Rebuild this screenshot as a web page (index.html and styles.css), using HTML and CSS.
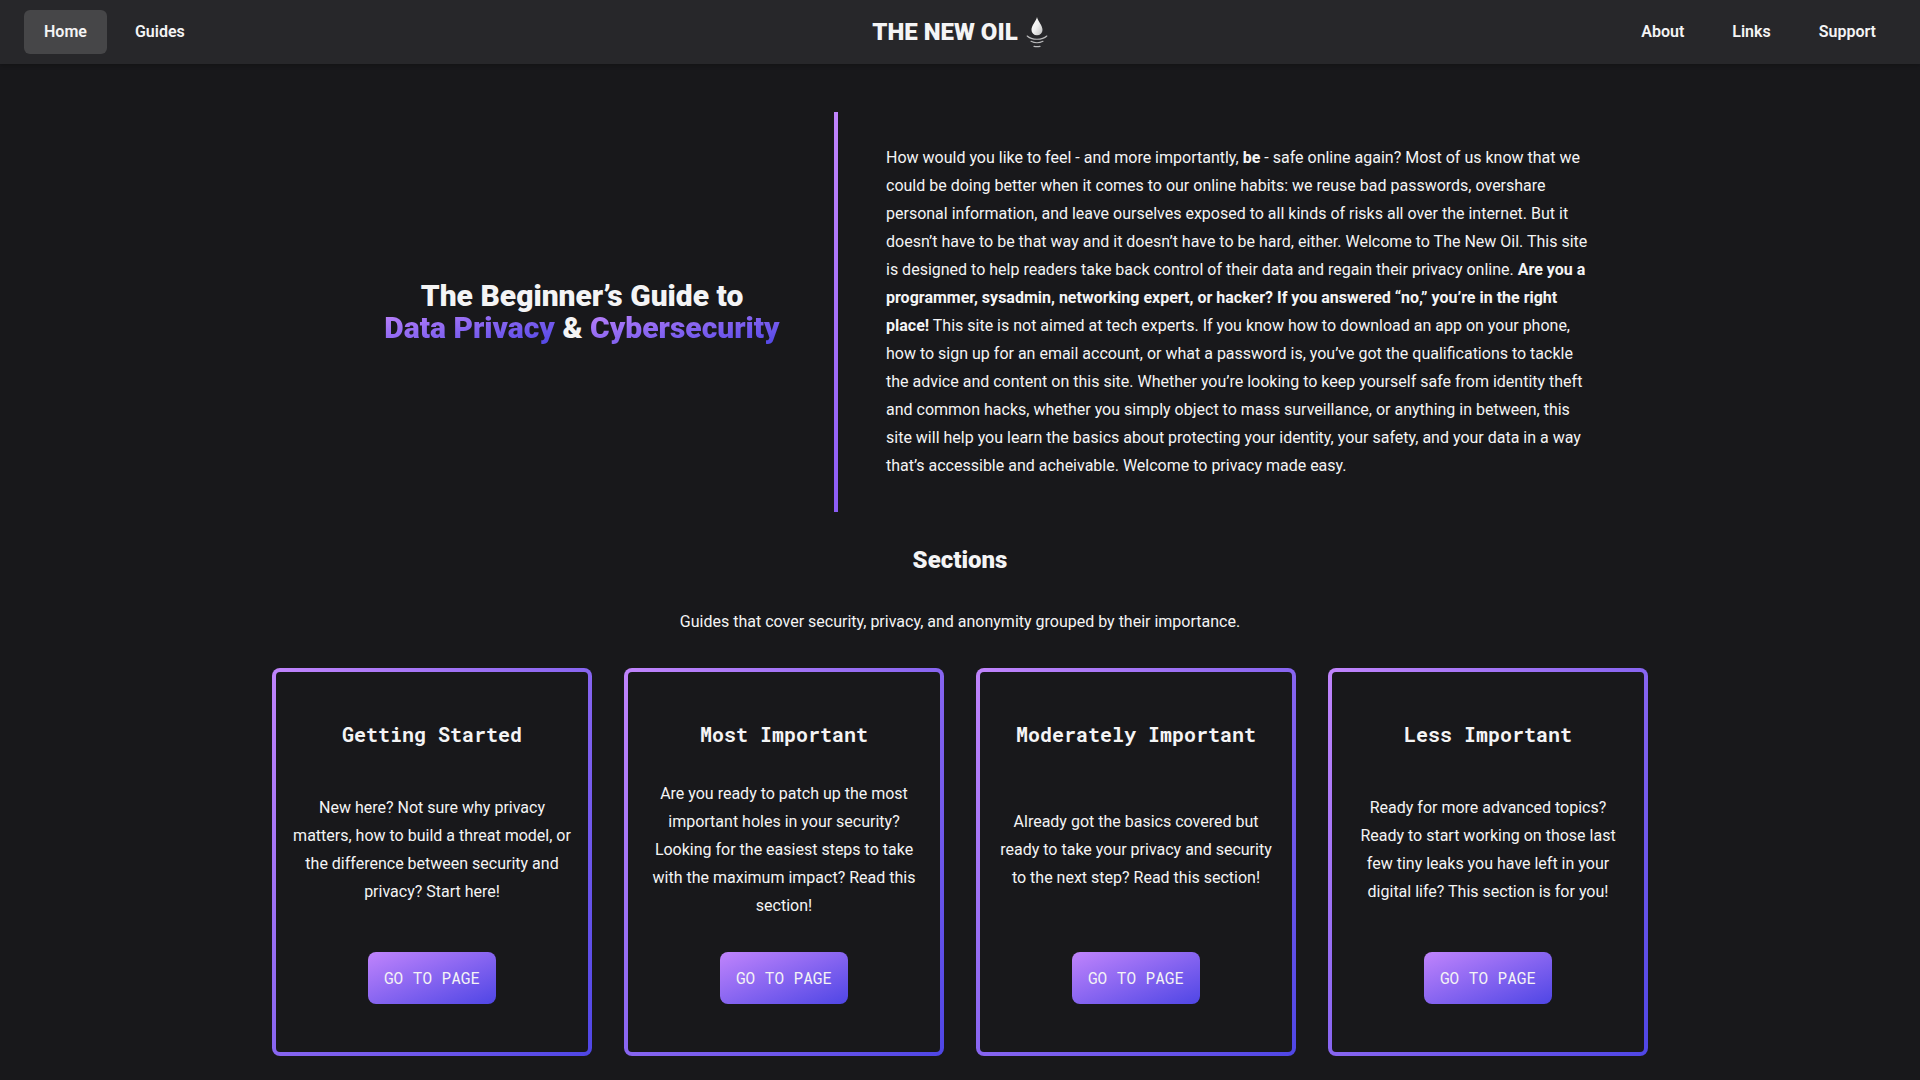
FILE: index.html
```html
<!DOCTYPE html>
<html lang="en">
<head>
<meta charset="utf-8">
<meta name="viewport" content="width=device-width, initial-scale=1">
<title>The New Oil</title>
<link rel="stylesheet" href="styles.css">
</head>
<body>
<header class="navbar">
  <nav class="nav-group" aria-label="Main">
    <a class="nav-link nav-link-active" href="#" aria-current="page">Home</a>
    <a class="nav-link" href="#guides">Guides</a>
  </nav>
  <a class="brand" href="#">
    <span>THE NEW OIL</span>
    <svg class="brand-icon" viewBox="0 0 22 32" aria-hidden="true">
      <defs>
        <linearGradient id="drop" x1="0" y1="0" x2="1" y2="1">
          <stop offset="0" stop-color="#ffffff"/>
          <stop offset="0.5" stop-color="#f0f0f0"/>
          <stop offset="1" stop-color="#bcbcbc"/>
        </linearGradient>
      </defs>
      <path d="M11 1C10.400 5 5.500 9 5.500 14A5.500 5.300 0 0 0 16.500 14C16.500 9 11.600 5 11 1Z" fill="url(#drop)"/>
      <g fill="none" stroke="#b9b9bb" stroke-linecap="round">
        <path d="M1.200 20Q4.500 23.300 11 23.300T20.800 20" stroke-width="1.100"/>
        <path d="M5 25.300Q11 28.200 17 25.300" stroke-width="1.100"/>
        <path d="M8 30.300Q11 31 14 30.300" stroke-width="1.200"/>
      </g>
    </svg>
  </a>
  <nav class="nav-group nav-group-end" aria-label="More">
    <a class="nav-link" href="#about">About</a>
    <a class="nav-link" href="#links">Links</a>
    <a class="nav-link" href="#support">Support</a>
  </nav>
</header>
<main>
  <section class="hero">
    <h1 class="hero-title">The Beginner’s Guide to<br><span class="accent">Data Privacy</span> &amp; <span class="accent">Cybersecurity</span></h1>
    <p class="hero-text">How would you like to feel - and more importantly, <strong>be</strong> - safe online again? Most of us know that we could be doing better when it comes to our online habits: we reuse bad passwords, overshare personal information, and leave ourselves exposed to all kinds of risks all over the internet. But it doesn’t have to be that way and it doesn’t have to be hard, either. Welcome to The New Oil. This site is designed to help readers take back control of their data and regain their privacy online. <strong>Are you a programmer, sysadmin, networking expert, or hacker? If you answered “no,” you’re in the right place!</strong> This site is not aimed at tech experts. If you know how to download an app on your phone, how to sign up for an email account, or what a password is, you’ve got the qualifications to tackle the advice and content on this site. Whether you’re looking to keep yourself safe from identity theft and common hacks, whether you simply object to mass surveillance, or anything in between, this site will help you learn the basics about protecting your identity, your safety, and your data in a way that’s accessible and acheivable. Welcome to privacy made easy.</p>
  </section>
  <section class="sections" id="guides">
    <h2 class="sections-title">Sections</h2>
    <p>Guides that cover security, privacy, and anonymity grouped by their importance.</p>
    <div class="cards">
      <article class="card">
        <h3 class="card-title">Getting Started</h3>
        <p class="card-text">New here? Not sure why privacy matters, how to build a threat model, or the difference between security and privacy? Start here!</p>
        <a class="button" href="#getting-started">GO TO PAGE</a>
      </article>
      <article class="card">
        <h3 class="card-title">Most Important</h3>
        <p class="card-text">Are you ready to patch up the most important holes in your security? Looking for the easiest steps to take with the maximum impact? Read this section!</p>
        <a class="button" href="#most-important">GO TO PAGE</a>
      </article>
      <article class="card">
        <h3 class="card-title">Moderately Important</h3>
        <p class="card-text">Already got the basics covered but ready to take your privacy and security to the next step? Read this section!</p>
        <a class="button" href="#moderately-important">GO TO PAGE</a>
      </article>
      <article class="card">
        <h3 class="card-title">Less Important</h3>
        <p class="card-text">Ready for more advanced topics? Ready to start working on those last few tiny leaks you have left in your digital life? This section is for you!</p>
        <a class="button" href="#less-important">GO TO PAGE</a>
      </article>
    </div>
  </section>
</main>
</body>
</html>
```
FILE: styles.css
```css
:root {
  --bg: #18181b;
  --bar: #27272a;
  --text: #f4f4f5;
  --from: #c084fc;
  --to: #4f46e5;
  --mono: "Roboto Mono", "Liberation Mono", monospace;
}

* {
  box-sizing: border-box;
  margin: 0;
}

body {
  background: var(--bg);
  color: var(--text);
  font: 16px/28px Roboto, sans-serif;
}

a {
  color: inherit;
  text-decoration: none;
}

.navbar {
  display: grid;
  grid-template-columns: 1fr auto 1fr;
  align-items: center;
  padding: 10px 24px;
  background: var(--bar);
  box-shadow: 0 2px 4px rgba(0, 0, 0, 0.2);
}

.nav-group {
  display: flex;
  gap: 8px;
}

.nav-group-end {
  justify-content: flex-end;
}

.nav-link {
  padding: 8px 20px;
  border-radius: 6px;
  font-weight: 600;
}

.nav-link-active {
  background: #464648;
}

.brand {
  display: flex;
  align-items: center;
  gap: 8px;
  font-size: 24px;
  font-weight: 900;
}

.brand-icon {
  width: 22px;
  height: 32px;
}

.hero {
  display: grid;
  grid-template-columns: 2fr 3fr;
  align-items: center;
  max-width: 1260px;
  margin: 48px auto 32px;
}

.hero-title {
  font-size: 30px;
  line-height: 32px;
  font-weight: 900;
  text-align: center;
}

.accent {
  background: linear-gradient(to bottom right, var(--from), var(--to));
  background-clip: text;
  -webkit-background-clip: text;
  color: transparent;
}

.hero-text {
  padding: 32px 0 32px 48px;
  border-left: 4px solid;
  border-image: linear-gradient(to bottom, var(--from), #8b5cf6) 1;
}

.sections {
  display: grid;
  gap: 32px;
  max-width: 1376px;
  margin: 0 auto;
  padding-bottom: 24px;
  text-align: center;
}

.sections-title {
  font-size: 24px;
  line-height: 32px;
  font-weight: 900;
}

.cards {
  display: grid;
  grid-template-columns: repeat(4, 1fr);
  gap: 32px;
}

.card {
  display: flex;
  flex-direction: column;
  align-items: center;
  gap: 32px;
  padding: 48px 16px;
  border: 4px solid transparent;
  border-radius: 8px;
  background:
    linear-gradient(var(--bg), var(--bg)) padding-box,
    linear-gradient(to bottom right, var(--from), var(--to)) border-box;
}

.card-title {
  font: 700 20px/28px var(--mono);
}

.card-text {
  display: flex;
  flex: 1;
  align-items: center;
}

.button {
  padding: 12px 16px;
  border-radius: 8px;
  background: linear-gradient(to bottom right, var(--from), var(--to));
  font-family: var(--mono);
}

@media (max-width: 1376px) {
  .cards {
    grid-template-columns: repeat(auto-fit, minmax(280px, 1fr));
  }
}
```
